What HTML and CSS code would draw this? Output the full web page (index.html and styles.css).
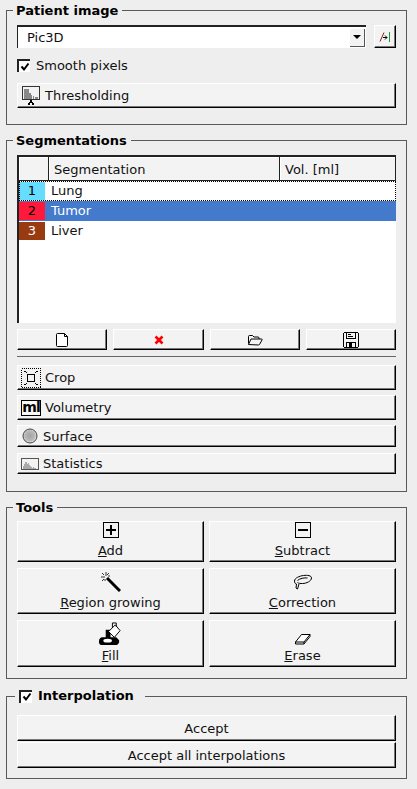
FILE: index.html
```html
<!DOCTYPE html>
<html lang="en">

<head>
    <meta charset="UTF-8" />
    <title>Segmentation</title>
    <link rel="stylesheet" href="styles.css">
</head>

<body>

    <!-- Patient image -->
    <fieldset class="group group-image">
        <legend>Patient image</legend>
        <div class="combo-row">
            <div class="combo">
                <span class="combo-text">Pic3D</span>
                <span class="combo-arrow"><i></i></span>
            </div>
            <button class="btn btn-small">
                <svg width="12" height="12" viewBox="0 0 12 12" fill="none">
                    <path d="M1 10.500L5 1.500" stroke="#8a1c1c" />
                    <path d="M4 6.500h4" stroke="#000" />
                    <path d="M6 4.500l2 2-2 2" stroke="#000" />
                    <path d="M10.500 1v10" stroke="#1a9a3a" />
                </svg>
            </button>
        </div>
        <label class="check-row">
            <span class="check"><svg width="10" height="10" viewBox="0 0 10 10" fill="none"><path d="M1.500 4.500l2.500 3L8.500 1.500" stroke="#000" stroke-width="2" /></svg></span>
            Smooth pixels
        </label>
        <button class="btn btn-icon btn-thresh">
            <svg width="18" height="20" viewBox="0 0 18 20" shape-rendering="crispEdges">
                <rect x="0.500" y="0.500" width="17" height="13" fill="#f3f3f3" stroke="#333" />
                <path d="M2 3h5v10H2zM7 7h2v6H7zM9 9h1v4H9zM11 10h1v3h-1zM13 11h3v2h-3z" fill="#888" />
                <path d="M8 14h2v2H8zM7 16h4v1H7zM6 17h2v2H6zM10 17h2v2h-2z" fill="#000" />
            </svg>
            Thresholding
        </button>
    </fieldset>

    <!-- Segmentations -->
    <fieldset class="group group-seg">
        <legend>Segmentations</legend>
        <div class="seg-table">
            <div class="seg-head">
                <div class="head-cell head-num"></div>
                <div class="head-cell head-name">Segmentation</div>
                <div class="head-cell head-vol">Vol. [ml]</div>
            </div>
            <div class="seg-row row-focus">
                <span class="seg-num num-lung">1</span>
                <span class="seg-name">Lung</span>
            </div>
            <div class="seg-row row-selected">
                <span class="seg-num num-tumor">2</span>
                <span class="seg-name">Tumor</span>
            </div>
            <div class="seg-row">
                <span class="seg-num num-liver">3</span>
                <span class="seg-name">Liver</span>
            </div>
        </div>

        <div class="file-row">
            <button class="btn">
                <svg width="14" height="16" viewBox="0 0 14 16" fill="#fff" stroke="#000">
                    <path d="M1.500 2.500q0-1 1-1h7l3 3v9q0 1-1 1h-9q-1 0-1-1z" />
                    <path d="M9.500 1.500v3h3" fill="none" />
                </svg>
            </button>
            <button class="btn">
                <svg width="10" height="10" viewBox="0 0 10 10" stroke="#f00" stroke-width="2.600" fill="none">
                    <path d="M1.500 1.500l7 7M8.500 1.500l-7 7" />
                </svg>
            </button>
            <button class="btn">
                <svg width="16" height="12" viewBox="0 0 16 12" fill="none" stroke="#000">
                    <path d="M1.500 9.500v-7q0-1 1-1h3l1.500 1.500h4q1 0 1 1v1" />
                    <path d="M1.500 10.500l2.500-5.500h10.500q1 0 .5 1l-2.500 4.500q-.5.500-1 .5z" />
                </svg>
            </button>
            <button class="btn">
                <svg width="16" height="16" viewBox="0 0 16 16" fill="none" stroke="#000" shape-rendering="crispEdges">
                    <path d="M1.500.500h13l1 1v13l-1 1h-13l-1-1v-13z" />
                    <path d="M3.500.500v6h9v-6M5 2.500h3M5 4.500h5M3.500 15.500v-5h9v5" />
                    <path d="M6 11h3v4H6z" fill="#000" stroke="none" />
                </svg>
            </button>
        </div>

        <div class="separator"></div>

        <button class="btn btn-icon btn-crop">
            <svg width="20" height="20" viewBox="0 0 20 20" fill="none" shape-rendering="crispEdges">
                <rect x="0.500" y="0.500" width="19" height="19" stroke="#000" stroke-dasharray="1 1" />
                <rect x="6.500" y="6.500" width="7" height="7" stroke="#000" />
                <path d="M3 3h2v1H3zM5 4h1v1H5zM15 3h2v1h-2zM14 4h1v1h-1zM3 16h2v1H3zM5 15h1v1H5zM15 16h2v1h-2zM14 15h1v1h-1z" fill="#000" />
            </svg>
            Crop
        </button>
        <button class="btn btn-icon btn-vol">
            <span class="ml-icon">ml</span>
            Volumetry
        </button>
        <button class="btn btn-icon btn-surface">
            <svg width="16" height="16" viewBox="0 0 16 16">
                <defs>
                    <radialGradient id="ball" cx="0.480" cy="0.480" r="0.550">
                        <stop offset="0" stop-color="#a4a4a4" />
                        <stop offset="0.650" stop-color="#b8b8b8" />
                        <stop offset="1" stop-color="#f2f2f2" />
                    </radialGradient>
                </defs>
                <circle cx="8" cy="8" r="7" fill="url(#ball)" stroke="#444" />
            </svg>
            Surface
        </button>
        <button class="btn btn-icon btn-stats">
            <svg width="18" height="12" viewBox="0 0 18 12" shape-rendering="crispEdges">
                <rect x="0.500" y="0.500" width="17" height="11" fill="#f3f3f3" stroke="#555" />
                <path d="M2 10V8h1V6h1V4h2v2h1V5h1v2h1V8h1v1h1v1h1V9h1v1h2v1H2z" fill="#aaa" />
            </svg>
            Statistics
        </button>
    </fieldset>

    <!-- Tools -->
    <fieldset class="group group-tools">
        <legend>Tools</legend>
        <div class="tools-grid">
            <button class="btn tool tool-add">
                <svg width="16" height="16" viewBox="0 0 16 16" fill="none" stroke="#000" shape-rendering="crispEdges">
                    <rect x="0.500" y="0.500" width="15" height="15" />
                    <path d="M3 7h10v2H3zM7 3h2v10H7z" fill="#000" stroke="none" />
                </svg>
                <span><u>A</u>dd</span>
            </button>
            <button class="btn tool tool-add">
                <svg width="16" height="16" viewBox="0 0 16 16" fill="none" stroke="#000" shape-rendering="crispEdges">
                    <rect x="0.500" y="0.500" width="15" height="15" />
                    <path d="M3 7h10v2H3z" fill="#000" stroke="none" />
                </svg>
                <span><u>S</u>ubtract</span>
            </button>
            <button class="btn tool">
                <svg width="20" height="20" viewBox="0 0 20 20" fill="none">
                    <path d="M6 6l13 13" stroke="#000" stroke-width="3" />
                    <path d="M5 0v4M0 5h4M8 1L6 3M1 1l2 2M1 9l2-2M7 4h2M4 7v2" stroke="#333" />
                </svg>
                <span><u>R</u>egion growing</span>
            </button>
            <button class="btn tool">
                <svg width="20" height="18" viewBox="0 0 20 18" fill="none" stroke="#000">
                    <path d="M1.500 7c0-3 5-5 9-5.500s8 0 8 2.500c0 3-5 5.500-9 5.500-2 0-4 0-5-1" />
                    <path d="M4.500 6.500c2-2 7-3 10-2.500" />
                    <path d="M1.500 7c0 2 1 3 2 3l-.5 4 1.500 1 1.500-5" />
                </svg>
                <span><u>C</u>orrection</span>
            </button>
            <button class="btn tool">
                <svg width="23" height="23" viewBox="0 0 24 24">
                    <path d="M7 8h5v8h6l3 3v2q-1 3-4 3H4q-4 0-4-3v-1q0-3 3-4h4z" fill="#000" />
                    <ellipse cx="9" cy="19.500" rx="4.500" ry="2" fill="#fff" />
                    <path d="M17 3l5 6-6 7-6-6z" fill="#fff" stroke="#000" />
                    <path d="M14 6V1h4v4" fill="none" stroke="#000" />
                </svg>
                <span><u>F</u>ill</span>
            </button>
            <button class="btn tool">
                <svg width="16" height="12" viewBox="0 0 16 12" fill="#fff" stroke="#000">
                    <path d="M.500 9l6-7.500h8.500l-6 7.500z" />
                    <path d="M.500 9v2h8.500l6-7.500V1.500M9 9v2" fill="none" />
                </svg>
                <span><u>E</u>rase</span>
            </button>
        </div>
    </fieldset>

    <!-- Interpolation -->
    <fieldset class="group group-interp">
        <legend>
            <span class="check"><svg width="10" height="10" viewBox="0 0 10 10" fill="none"><path d="M1.500 4.500l2.500 3L8.500 1.500" stroke="#000" stroke-width="2" /></svg></span>
            Interpolation
        </legend>
        <button class="btn btn-accept">Accept</button>
        <button class="btn btn-accept">Accept all interpolations</button>
    </fieldset>

</body>

</html>
```

FILE: styles.css
```css
* {
    box-sizing: border-box;
}

body {
    margin: 0;
    background: #eeeeee;
    color: #111;
    font-family: "DejaVu Sans", sans-serif;
    font-size: 13px;
    width: 417px;
    height: 789px;
    overflow: hidden;
}

/* Group boxes */
.group {
    width: 401px;
    margin: 0 0 0 6px;
    padding: 0 9px 0 10px;
    border: 1px solid #5a5a5a;
    min-width: 0;
}

.group legend {
    padding: 2px 4px 0 3px;
    margin-left: -4px;
    height: 20px;
    line-height: 18px;
    font-weight: bold;
    color: #000;
    display: flex;
    align-items: center;
    gap: 7px;
}

.group-image {
    height: 125px;
}

.group-seg {
    margin-top: 5px;
    height: 362px;
}

.group-tools {
    margin-top: 5px;
    height: 182px;
}

.group-interp {
    margin-top: 7px;
    height: 93px;
}

/* Buttons */
.btn {
    display: flex;
    align-items: center;
    justify-content: center;
    padding: 0;
    margin: 0;
    font: inherit;
    color: #111;
    background: #f3f3f3;
    border: 1px solid #fff;
    border-right-color: #000;
    border-bottom-color: #000;
    box-shadow: inset -1px -1px 0 #777;
    border-radius: 0;
}

.btn-icon {
    justify-content: flex-start;
    width: 379px;
    padding-left: 3px;
    gap: 4px;
}

.btn-small {
    width: 22px;
    height: 23px;
}

/* Patient image */
.combo-row {
    display: flex;
    gap: 8px;
    margin-top: 5px;
}

.combo {
    width: 349px;
    height: 23px;
    display: flex;
    justify-content: space-between;
    align-items: center;
    background: #fff;
    border-top: 2px solid #222;
    border-left: 1px solid #222;
    padding-left: 9px;
}

.combo-arrow {
    width: 15px;
    height: 18px;
    margin-right: 1px;
    background: #f3f3f3;
    border-right: 1px solid #555;
    border-bottom: 1px solid #555;
    display: flex;
    align-items: center;
    justify-content: center;
}

.combo-arrow i {
    border-top: 4px solid #000;
    border-left: 4px solid transparent;
    border-right: 4px solid transparent;
}

.check-row {
    display: flex;
    align-items: center;
    gap: 6px;
    margin-top: 9px;
    height: 17px;
}

.check {
    display: inline-flex;
    align-items: center;
    justify-content: center;
    width: 13px;
    height: 13px;
    background: #fff;
    border-top: 2px solid #222;
    border-left: 2px solid #222;
}

.btn-thresh {
    margin-top: 9px;
    height: 25px;
    padding-left: 4px;
    gap: 5px;
}

/* Segmentation table */
.seg-table {
    margin-top: 5px;
    width: 379px;
    height: 168px;
    background: #fff;
    border-top: 2px solid #222;
    border-left: 2px solid #222;
}

.seg-head {
    display: flex;
    height: 24px;
    background: #222;
}

.head-cell {
    height: 23px;
    background: #f3f3f3;
    border-top: 1px solid #fff;
    border-left: 1px solid #fff;
    display: flex;
    align-items: center;
}

.head-num {
    width: 29px;
    margin-right: 1px;
}

.head-name {
    width: 230px;
    margin-right: 1px;
    padding-left: 4px;
}

.head-vol {
    width: 115px;
    padding-left: 4px;
}

.seg-row {
    display: flex;
    align-items: center;
    height: 20px;
    gap: 6px;
}

.row-focus {
    outline: 1px dotted #000;
    outline-offset: -1px;
}

.row-selected {
    background: #447acc;
    color: #fff;
}

.seg-num {
    width: 26px;
    height: 18px;
    padding-bottom: 2px;
    display: flex;
    align-items: center;
    justify-content: center;
    color: #000;
}

.seg-name {
    padding-bottom: 2px;
}

.num-lung {
    background: #66ddff;
}

.num-tumor {
    background: #ff1a3c;
}

.num-liver {
    background: #993b10;
    color: #fff;
}

/* New / delete / open / save */
.file-row {
    display: grid;
    grid-template-columns: 90px 91px 90px 90px;
    gap: 6px;
    margin-top: 6px;
    width: 379px;
}

.file-row .btn {
    height: 21px;
}

.separator {
    width: 379px;
    height: 1px;
    background: #666;
    margin-top: 6px;
}

.btn-crop {
    margin-top: 8px;
    height: 25px;
}

.btn-vol {
    margin-top: 5px;
    height: 25px;
}

.btn-surface {
    margin-top: 5px;
    height: 22px;
    padding-left: 4px;
    gap: 5px;
}

.btn-stats {
    margin-top: 6px;
    height: 21px;
}

.ml-icon {
    width: 20px;
    height: 16px;
    border: 1px solid #000;
    background: #f8f8f8;
    color: #000;
    font-weight: bold;
    font-size: 14px;
    line-height: 13px;
    letter-spacing: -1px;
    text-align: center;
}

/* Tools */
.tools-grid {
    display: grid;
    grid-template-columns: 187px 187px;
    grid-template-rows: 41px 46px 47px;
    gap: 6px 5px;
    margin-top: 4px;
}

.tool {
    flex-direction: column;
    justify-content: flex-end;
    gap: 3px;
    padding-bottom: 3px;
}

.tool-add {
    gap: 5px;
}

/* Interpolation */
.group-interp legend {
    margin-left: -2px;
    padding: 0 11px 0 4px;
    gap: 6px;
}

.btn-accept {
    width: 379px;
    height: 26px;
}

.group-interp .btn-accept:first-of-type {
    margin-top: 9px;
    margin-bottom: 1px;
}
```
